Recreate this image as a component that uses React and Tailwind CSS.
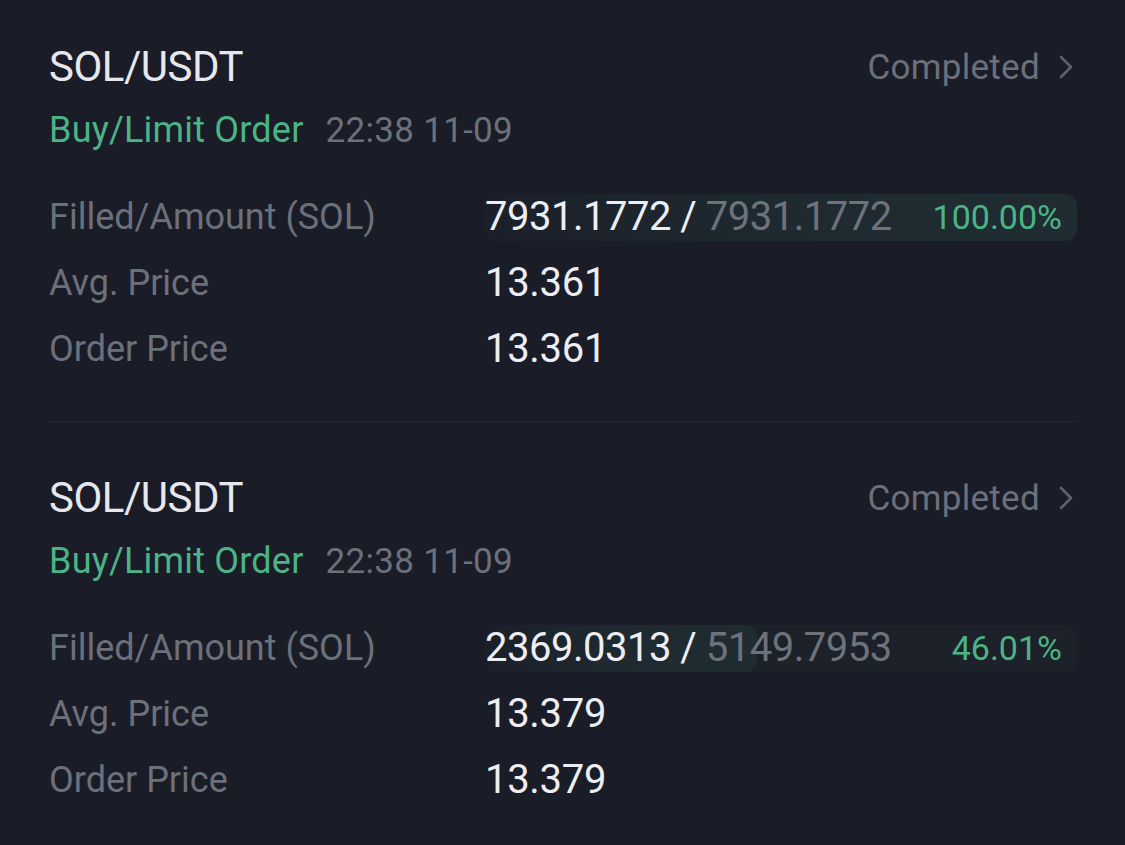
import React from "react";

const font = { fontFamily: "Roboto, 'Noto Sans', sans-serif" };

function Chevron() {
  return (
    <svg width="16" height="26" viewBox="0 0 16 26" fill="none" className="ml-[18px] mr-[3px]">
      <path d="M3 3 L13 13 L3 23" stroke="#5c616c" strokeWidth="2.6" strokeLinecap="round" strokeLinejoin="round" />
    </svg>
  );
}

function Card({ filled, amount, pct, frac, avg, price, top }) {
  return (
    <div className={top}>
      <div className="flex h-[50px] items-center justify-between">
        <div className="text-[42px] text-[#e6e8ee] tracking-[-0.5px]">SOL/USDT</div>
        <div className="flex items-center">
          <span className="text-[35px] text-[#6b707b] tracking-[0.3px]">Completed</span>
          <Chevron />
        </div>
      </div>
      <div className="mt-[16px] flex h-[44px] items-center">
        <span className="text-[36px] text-[#4cb386] tracking-[0.2px]">Buy/Limit Order</span>
        <span className="ml-[22px] text-[35px] text-[#6b707b] tracking-[0.3px]">22:38 11-09</span>
      </div>
      <div className="mt-[32px]">
        <div className="flex h-[66px] items-center">
          <div className="w-[436px] text-[36px] text-[#6b707b]">Filled/Amount (SOL)</div>
          <div className="relative flex h-[47px] flex-1 items-center overflow-hidden rounded-[12px] bg-[#1c212a]">
            <div
              className="absolute inset-y-0 left-0 rounded-[12px] bg-gradient-to-r from-[#1b1f29] via-[#1e2a30] to-[#1f2c32]"
              style={{ width: `${frac * 100}%` }}
            />
            <div className="relative flex w-full items-center justify-between pr-[15px]">
              <div className="text-[40px] tracking-[-0.5px]">
                <span className="text-[#eceef3]">{filled} / </span>
                <span className="text-[#6d727c]">{amount}</span>
              </div>
              <span className="text-[34px] text-[#4cb386]">{pct}</span>
            </div>
          </div>
        </div>
        <div className="flex h-[66px] items-center">
          <div className="w-[436px] text-[36px] text-[#6b707b]">Avg. Price</div>
          <div className="text-[40px] text-[#eceef3] tracking-[-0.3px]">{avg}</div>
        </div>
        <div className="flex h-[66px] items-center">
          <div className="w-[436px] text-[36px] text-[#6b707b]">Order Price</div>
          <div className="text-[40px] text-[#eceef3] tracking-[-0.3px]">{price}</div>
        </div>
      </div>
    </div>
  );
}

export default function App() {
  return (
    <div className="h-[845px] w-full overflow-hidden bg-[#1a1d27] pl-[49px] pr-[48px] leading-none" style={font}>
      <Card top="pt-[42px]" filled="7931.1772" amount="7931.1772" pct="100.00%" frac={1} avg="13.361" price="13.361" />
      <div className="mt-[39px] h-px bg-[#272b35]" />
      <Card top="pt-[51px]" filled="2369.0313" amount="5149.7953" pct="46.01%" frac={0.4601} avg="13.379" price="13.379" />
    </div>
  );
}
